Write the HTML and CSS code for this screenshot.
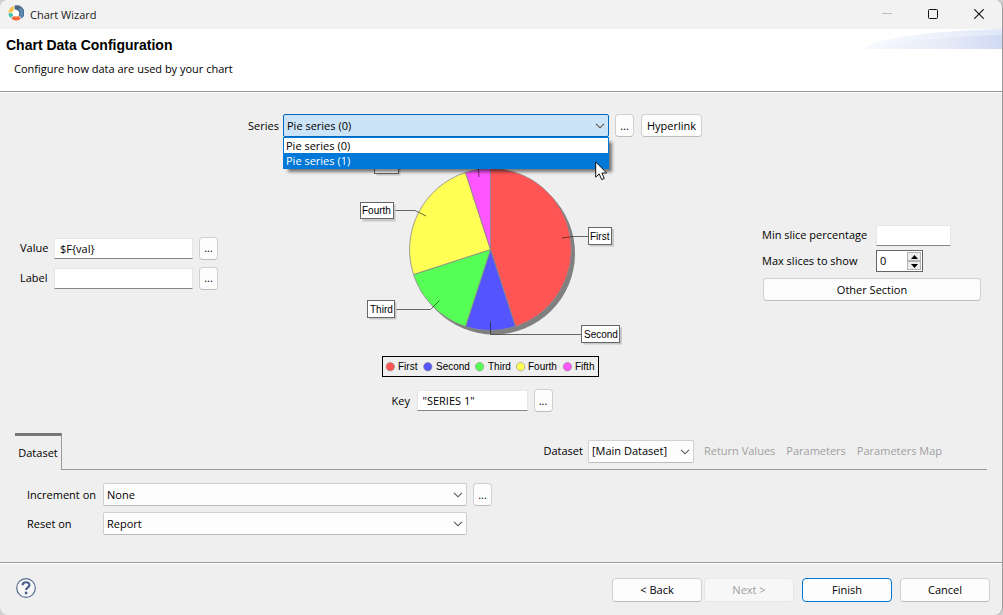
FILE: index.html
```html
<!DOCTYPE html>
<html lang="en">
<head>
<meta charset="utf-8">
<title>Chart Wizard</title>
<link rel="stylesheet" href="styles.css">
</head>
<body>
<svg class="defs" width="0" height="0" aria-hidden="true">
  <symbol id="chevron" viewBox="0 0 10 6"><path d="M1 .8 5 4.8 9 .8" fill="none" stroke="#555" stroke-width="1.1"/></symbol>
</svg>
<div class="window">
  <header class="titlebar">
    <svg class="app-icon" width="16" height="16" viewBox="0 0 16 16" aria-hidden="true">
      <circle cx="8" cy="8" r="6.5" fill="#fff"/>
      <path d="M6.6 0.5A8 7.5 0 0 1 14 13.2L10.6 10.6A4 4 0 0 0 6.6 4.6Z" fill="#4a6684"/>
      <path d="M12.5 2.3A8 8 0 0 1 14 13.2L11.2 11A4.6 4.6 0 0 0 10.4 4.8Z" fill="#5f88ae"/>
      <path d="M5.8 .9 5.8 5A4.5 4.5 0 0 0 4.4 7.6L.4 7.6A7.6 7.6 0 0 1 5.8 .9Z" fill="#f5c04c"/>
      <path d="M.4 8.2H4.3A4 4 0 0 0 5.4 10.6L2.6 13A7.4 7.4 0 0 1 .4 8.2Z" fill="#3cc0b0"/>
      <path d="M3.2 13.4 6 10.9A4.4 4.4 0 0 0 10.4 10.9L13 13.8A7.6 7.6 0 0 1 3.2 13.4Z" fill="#f4683c"/>
    </svg>
    <span class="title">Chart Wizard</span>
    <button class="caption" aria-label="Minimize" disabled><svg width="10" height="10"><path d="M0 4.5H10" stroke="#bbb"/></svg></button>
    <button class="caption" aria-label="Maximize"><svg width="10" height="10"><rect x=".5" y=".5" width="9" height="9" rx="1" fill="none" stroke="#111"/></svg></button>
    <button class="caption" aria-label="Close"><svg width="10" height="10"><path d="M.3.3 9.7 9.7M9.7.3.3 9.7" stroke="#111" stroke-width="1.1"/></svg></button>
  </header>

  <section class="banner">
    <div>
      <h1>Chart Data Configuration</h1>
      <p>Configure how data are used by your chart</p>
    </div>
    <svg class="swoosh" width="140" height="20" viewBox="0 0 140 20" aria-hidden="true">
      <defs>
        <linearGradient id="fade"><stop offset="0" stop-color="#f8faff"/><stop offset=".5" stop-color="#eef2fb"/><stop offset="1" stop-color="#dfe8f8"/></linearGradient>
        <linearGradient id="deep"><stop offset="0" stop-color="#f8faff"/><stop offset=".6" stop-color="#e6ebf8"/><stop offset="1" stop-color="#d0daf4"/></linearGradient>
      </defs>
      <path d="M0 20C20 8 70 2 140 0V20Z" fill="url(#fade)"/>
      <path d="M0 20C40 12 90 7 140 6V20Z" fill="url(#deep)"/>
    </svg>
  </section>

  <main class="content">
    <div class="workspace">
      <div class="fields">
        <label for="value">Value</label>
        <input class="text" id="value" type="text" value="$F{val}">
        <button class="btn more" aria-label="Edit value">...</button>
        <label for="label">Label</label>
        <input class="text" id="label" type="text">
        <button class="btn more" aria-label="Edit label">...</button>
      </div>

      <div class="preview">
        <div class="series">
          <label for="series">Series</label>
          <div class="combo combo-open">
            <select id="series"><option>Pie series (0)</option><option>Pie series (1)</option></select>
            <svg class="chevron" width="10" height="6"><use href="#chevron"/></svg>
            <ul class="menu" role="listbox" aria-label="Series">
              <li role="option">Pie series (0)</li>
              <li class="active" role="option" aria-selected="true">Pie series (1)
                <svg class="pointer" width="13" height="20" viewBox="0 0 13 20" aria-hidden="true"><path d="M.7.9V16.2L4.2 12.9 6.7 18.6 9.3 17.5 6.9 12H11.7Z" fill="#fff" stroke="#111"/></svg>
              </li>
            </ul>
          </div>
          <button class="btn more" aria-label="Edit series">...</button>
          <button class="btn link-btn">Hyperlink</button>
        </div>

        <svg class="chart" width="270" height="240" viewBox="355 145 270 240" role="img" aria-label="Pie chart with five slices">
          <circle cx="494" cy="253.5" r="81" fill="#808080"/>
          <g stroke="#8a8a8a" stroke-width=".8" stroke-linejoin="round">
            <path d="M490.5 249.5V168.5A81 81 0 0 1 515.5 326.5Z" fill="#f55"/>
            <path d="M490.5 249.5 515.5 326.5A81 81 0 0 1 465.5 326.5Z" fill="#55f"/>
            <path d="M490.5 249.5 465.5 326.5A81 81 0 0 1 413.5 274.5Z" fill="#5f5"/>
            <path d="M490.5 249.5 413.5 274.5A81 81 0 0 1 465.5 172.5Z" fill="#ff5"/>
            <path d="M490.5 249.5 465.5 172.5A81 81 0 0 1 490.5 168.5Z" fill="#f5f"/>
          </g>
          <g fill="none" stroke="#222" stroke-opacity=".75" stroke-width=".9">
            <path d="M562 238 573 236.5H588"/>
            <path d="M490.5 322V334.5H581"/>
            <path d="M439.5 300.5 430.5 309.5H395"/>
            <path d="M426 216 415 210.5H394"/>
            <path d="M479 177 478 165"/>
          </g>
          <g fill="#c8c8c8">
            <rect x="590" y="229" width="24" height="17.5"/><rect x="583.5" y="327.5" width="38.5" height="17"/>
            <rect x="369.5" y="302.5" width="27" height="17"/><rect x="362.5" y="204.5" width="33" height="17"/><rect x="376.5" y="158.5" width="24" height="17"/>
          </g>
          <g fill="#fff" stroke="#666">
            <rect x="588.5" y="227.5" width="23" height="17"/><rect x="581.5" y="325.5" width="38" height="17"/>
            <rect x="367.5" y="300.5" width="27" height="17"/><rect x="360.5" y="202.5" width="33" height="16"/><rect x="374.5" y="156.5" width="24" height="17"/>
          </g>
          <g class="chart-text">
            <text x="590" y="240">First</text><text x="584" y="338">Second</text><text x="370" y="313">Third</text><text x="362" y="214">Fourth</text>
          </g>
          <rect x="382.5" y="356.5" width="216" height="20" fill="none" stroke="#000"/>
          <g stroke="#888" stroke-width=".6">
            <circle cx="390.3" cy="366.7" r="4.2" fill="#f55"/><circle cx="427.8" cy="366.7" r="4.2" fill="#55f"/><circle cx="479.6" cy="366.7" r="4.2" fill="#5f5"/><circle cx="520.6" cy="366.7" r="4.2" fill="#ff5"/><circle cx="567.4" cy="366.7" r="4.2" fill="#f5f"/>
          </g>
          <g class="chart-text">
            <text x="398" y="370">First</text><text x="436" y="370">Second</text><text x="488" y="370">Third</text><text x="528" y="370">Fourth</text><text x="575" y="370">Fifth</text>
          </g>
        </svg>

        <div class="key">
          <label for="key">Key</label>
          <input class="text" id="key" type="text" value="&quot;SERIES 1&quot;">
          <button class="btn more" aria-label="Edit key">...</button>
        </div>
      </div>

      <div class="options">
        <div class="option">
          <label for="min">Min slice percentage</label>
          <input class="text" id="min" type="text">
        </div>
        <div class="option">
          <label for="max">Max slices to show</label>
          <div class="spinner">
            <input id="max" type="number" value="0">
            <div class="steps">
              <button aria-label="Increase"><svg width="7" height="4"><path d="M0 4 3.5 0 7 4Z"/></svg></button>
              <button aria-label="Decrease"><svg width="7" height="4"><path d="M0 0 3.5 4 7 0Z"/></svg></button>
            </div>
          </div>
        </div>
        <button class="btn">Other Section</button>
      </div>
    </div>

    <div class="tabs">
      <button class="tab" role="tab" aria-selected="true">Dataset</button>
      <div class="tools">
        <label for="dataset">Dataset</label>
        <div class="combo">
          <select id="dataset"><option>[Main Dataset]</option></select>
          <svg class="chevron" width="10" height="6"><use href="#chevron"/></svg>
        </div>
        <button class="flat" disabled>Return Values</button>
        <button class="flat" disabled>Parameters</button>
        <button class="flat" disabled>Parameters Map</button>
      </div>
    </div>

    <div class="panel">
      <label for="increment">Increment on</label>
      <div class="combo">
        <select id="increment"><option>None</option></select>
        <svg class="chevron" width="10" height="6"><use href="#chevron"/></svg>
      </div>
      <button class="btn more" aria-label="Edit increment">...</button>
      <label for="reset">Reset on</label>
      <div class="combo">
        <select id="reset"><option>Report</option></select>
        <svg class="chevron" width="10" height="6"><use href="#chevron"/></svg>
      </div>
    </div>
  </main>

  <footer class="footer">
    <button class="help" aria-label="Help">
      <svg width="20" height="20" viewBox="0 0 20 20"><circle cx="10" cy="10" r="9.3" fill="#f6f6f6" stroke="#5a6e92" stroke-width="1.2"/><path d="M6.6 7.3C6.7 3.3 13.4 3.3 13.4 7 13.4 9.4 10.1 9.2 10.1 12.1" fill="none" stroke="#4b5f8a" stroke-width="2.2"/><circle cx="10.1" cy="15" r="1.4" fill="#4b5f8a"/></svg>
    </button>
    <div class="nav">
      <button class="btn">&lt; Back</button>
      <button class="btn" disabled>Next &gt;</button>
    </div>
    <button class="btn primary">Finish</button>
    <button class="btn">Cancel</button>
  </footer>
</div>
</body>
</html>
```

FILE: styles.css
```css
* { box-sizing: border-box; }

body {
  margin: 0;
  background: #cfcfcf;
  color: #000;
  font: 11px/16px "Open Sans", "Noto Sans", sans-serif;
}

button, input, select { font: inherit; color: inherit; }
button { padding: 0; }
.defs { position: absolute; }

.window {
  display: flex;
  flex-direction: column;
  min-height: 100vh;
  overflow: hidden;
  border-right: 1px solid #9a9a9a;
  border-radius: 8px;
  background: #efefef;
}

.titlebar {
  display: flex;
  align-items: center;
  height: 29px;
  padding-left: 8px;
  background: #f2f2f2;
}
.title { flex: 1; margin-left: 6px; color: #1a1a1a; }
.titlebar svg { display: block; }
.app-icon { margin-bottom: 3px; }
.caption {
  display: grid;
  place-items: center;
  width: 46px;
  height: 27px;
  align-self: flex-start;
  border: 0;
  background: none;
}

.banner {
  display: flex;
  justify-content: space-between;
  min-height: 63px;
  border-bottom: 1px solid #9a9a9a;
  background: #fff;
}
.banner h1 {
  margin: 8px 0 0 6px;
  font: bold 14px/16px "Liberation Sans", Arial, sans-serif;
}
.banner p { margin: 8px 0 0 14px; }

.content {
  display: flex;
  flex: 1;
  flex-direction: column;
  padding: 0 15px;
  border-top: 1px solid #fff;
}

.workspace {
  display: grid;
  grid-template-columns: auto 1fr auto;
  align-items: center;
  padding: 21px 6px 21px 5px;
}

.fields {
  display: grid;
  grid-template-columns: 34px 139px 25px;
  align-items: center;
  row-gap: 7px;
}

.text {
  width: 100%;
  height: 21px;
  padding: 0 5px;
  border: 1px solid #e6e6e6;
  border-bottom-color: #868686;
  background: #fff;
}

.btn {
  height: 23px;
  border: 1px solid #d0d0d0;
  border-bottom-color: #bcbcbc;
  border-radius: 4px;
  background: #fdfdfd;
}
.btn:disabled { border-color: #e6e6e6; background: #f7f7f7; color: #9d9d9d; }
.more { width: 19px; margin-left: 6px; }

.preview { display: flex; flex-direction: column; align-items: center; }
.series {
  display: flex;
  align-items: center;
  align-self: stretch;
  margin: 0 60px 0 30px;
}
.series label { width: 35px; }
.series .combo { flex: 1; }
.link-btn { width: 61px; margin-left: 7px; }

.combo { position: relative; }
.combo select {
  display: block;
  width: 100%;
  height: 23px;
  padding: 0 20px 0 3px;
  appearance: none;
  border: 1px solid #d0d0d0;
  border-bottom-color: #bcbcbc;
  border-radius: 2px;
  background: #fdfdfd;
}
.combo-open select { border-color: #0067c0; background: #cce4f7; }
.chevron { position: absolute; top: 9px; right: 4px; pointer-events: none; }

.menu {
  position: absolute;
  top: 100%;
  left: 0;
  right: 0;
  z-index: 1;
  margin: 0;
  padding: 0;
  border: 1px solid #0078d7;
  background: #fff;
  box-shadow: 4px 4px 3px -1px rgba(0, 0, 0, .5);
  list-style: none;
}
.menu li { height: 15px; padding-left: 2px; line-height: 15px; }
.menu .active { position: relative; background: #0078d7; color: #fff; }
.pointer { position: absolute; top: 8px; right: 0; }

.chart { display: block; margin: 8px 0 4px; }
.chart-text { font: 10px "Liberation Sans", Arial, sans-serif; }

.key {
  display: grid;
  grid-template-columns: 25px 111px 25px;
  align-items: center;
  margin-right: 36px;
}

.options { display: grid; margin-bottom: 3px; }
.option {
  display: grid;
  grid-template-columns: 114px 75px;
  align-items: center;
  width: 219px;
  height: 26px;
  white-space: nowrap;
}
.options > .btn { margin: 4px 0 0 1px; }
.spinner {
  display: flex;
  width: 47px;
  height: 22px;
  border: 1px solid #646464;
  background: #fff;
}
.spinner input {
  flex: 1;
  min-width: 0;
  padding: 0 3px;
  appearance: textfield;
  border: 0;
  background: none;
}
.spinner input::-webkit-inner-spin-button { appearance: none; }
.steps { display: grid; width: 15px; padding: 1px 1px 1px 0; }
.steps button {
  display: grid;
  place-items: center;
  border: 1px solid #b4b4b4;
  background: #ececec;
}
.steps svg { display: block; }

.tabs { display: flex; height: 37px; }
.tab {
  width: 47px;
  border: 0;
  border-top: 3px solid #777;
  border-right: 1px solid #9a9a9a;
  background: none;
}
.tools {
  display: flex;
  flex: 1;
  align-items: center;
  justify-content: flex-end;
  padding-right: 45px;
  border-bottom: 1px solid #9a9a9a;
}
.tools label { margin-right: 5px; }
.tools .combo { width: 106px; margin-right: 10px; }
.flat { border: 0; background: none; color: #a0a0a0; }
.flat + .flat { margin-left: 11px; }

.panel {
  display: grid;
  grid-template-columns: 76px 364px 25px;
  align-items: center;
  gap: 6px 0;
  padding: 13px 12px 26px;
}

.footer {
  display: flex;
  align-items: center;
  gap: 8px;
  padding: 15px 12px 13px 16px;
  border-top: 1px solid #9a9a9a;
  box-shadow: inset 0 1px #fff;
}
.footer .btn { width: 90px; height: 24px; }
.help { margin: 0 auto 4px 0; border: 0; background: none; }
.help svg { display: block; }
.nav { display: flex; gap: 2px; }
.footer .primary { border-color: #0078d7; }
```
